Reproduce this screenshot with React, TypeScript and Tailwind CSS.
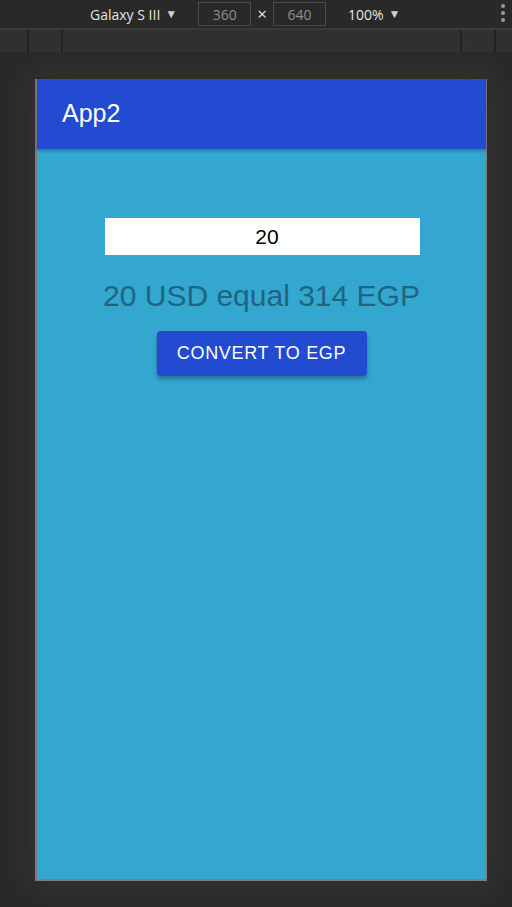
import { useState } from "react";

function Toolbar() {
	return (
		<div className="shrink-0">
			{/* device toolbar */}
			<div className="relative flex h-[30px] items-center border-b-2 border-[#3a3a3a] bg-[#292929] text-[14px] text-[#e3e3e3]">
				<div className="ml-[90px] flex items-center gap-[5px]">
					<span>Galaxy S III</span>
					<span className="text-[12px] text-[#d0d0d0]">▼</span>
				</div>
				<div className="ml-[21px] flex h-[24px] w-[53px] items-center justify-center border border-[#4a4a4a] text-[#8f8f8f]">
					360
				</div>
				<span className="mx-[6px] text-[17px] text-[#e3e3e3]">×</span>
				<div className="flex h-[24px] w-[53px] items-center justify-center border border-[#4a4a4a] text-[#8f8f8f]">
					640
				</div>
				<div className="ml-[22px] flex items-center gap-[5px]">
					<span>100%</span>
					<span className="text-[12px] text-[#d0d0d0]">▼</span>
				</div>
				<div className="absolute top-[4px] right-[7px] flex flex-col gap-[3px]">
					<span className="h-[4px] w-[4px] rounded-full bg-[#9a9a9a]" />
					<span className="h-[4px] w-[4px] rounded-full bg-[#9a9a9a]" />
					<span className="h-[4px] w-[4px] rounded-full bg-[#9a9a9a]" />
				</div>
			</div>
			{/* media query bar */}
			<div className="flex h-[22px] bg-[#303030]">
				<div className="w-[29px] border-r-2 border-[#222]" />
				<div className="w-[34px] border-r-2 border-[#222]" />
				<div className="flex-1 border-r-2 border-[#222]" />
				<div className="w-[34px] border-r-2 border-[#222]" />
				<div className="w-[16px]" />
			</div>
		</div>
	);
}

function PhoneApp() {
	const [amount, setAmount] = useState("20");
	const rate = 15.7;
	const result = Math.round(Number(amount) * rate);

	return (
		<div className="flex h-full flex-col bg-[#33a7cf] font-['Liberation_Sans',Arial,sans-serif]">
			<header className="relative z-10 flex h-[70px] shrink-0 items-center bg-[#224bd1] pl-[25px] shadow-[0_2px_3px_rgba(0,0,0,0.25)]">
				<h1 className="text-[25px] text-white">App2</h1>
			</header>
			<main className="flex flex-col items-center pt-[69px]">
				<input
					value={amount}
					onChange={(e) => setAmount(e.target.value)}
					className="ml-[1px] h-[37px] w-[315px] bg-white pl-[10px] text-center text-[21px] text-black outline-none"
				/>
				<p className="mt-[23px] text-[30px] leading-[36px] text-[#1f6580]">
					{amount} USD equal {result} EGP
				</p>
				<button
					type="button"
					className="mt-[17px] h-[45px] w-[210px] rounded-[4px] bg-[#224bd1] text-[18px] tracking-[0.7px] text-white uppercase shadow-[0_3px_4px_rgba(0,0,0,0.3)]"
				>
					Convert to EGP
				</button>
			</main>
		</div>
	);
}

export default function App() {
	return (
		<div className="flex h-[907px] w-full flex-col overflow-hidden bg-[#282828] font-['Open_Sans','Liberation_Sans',sans-serif]">
			<Toolbar />
			<div className="pt-[27px] pl-[35px]">
				<div className="h-[802px] w-[452px] border-r border-b-2 border-l-2 border-[#7c7c7c] shadow-[0_0_40px_10px_rgba(255,255,255,0.06)]">
					<PhoneApp />
				</div>
			</div>
		</div>
	);
}
